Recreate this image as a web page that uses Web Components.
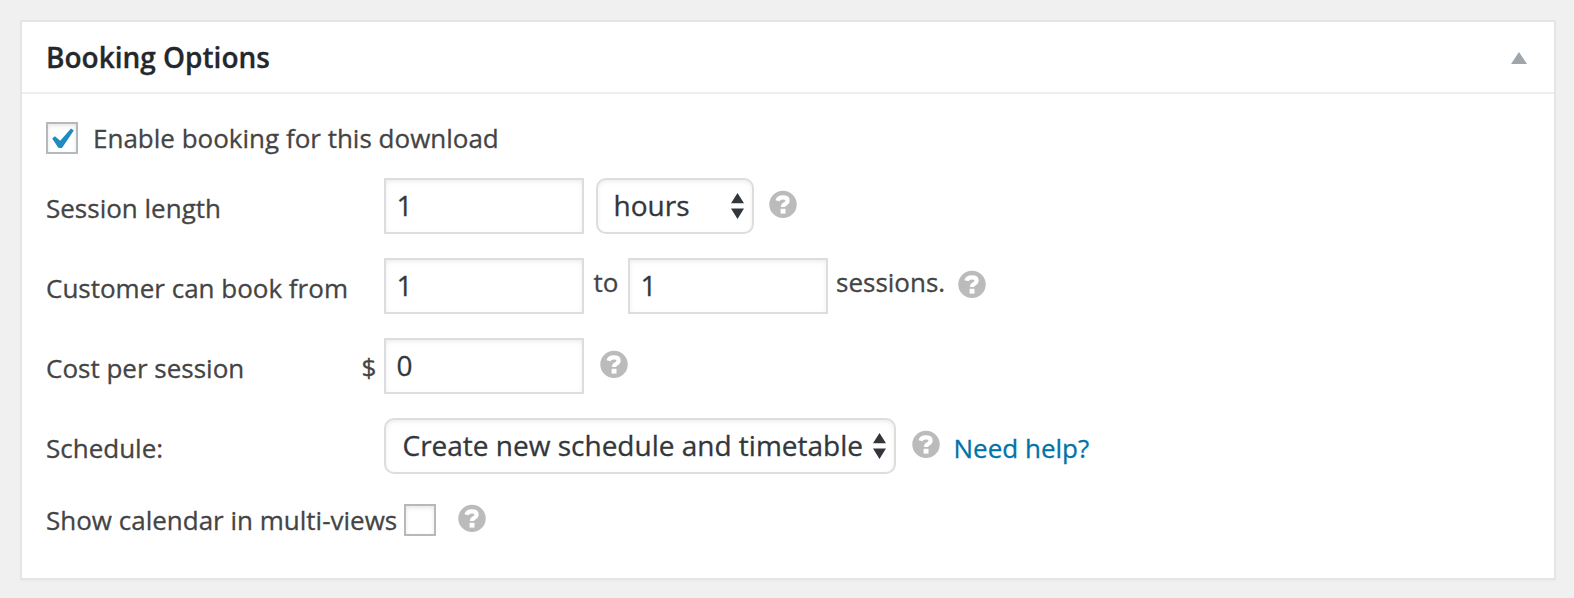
<!DOCTYPE html>
<html lang="en"><head><meta charset="utf-8"><title>Booking Options</title>
<style>
html,body{margin:0;height:100%}
body{background:#f0f0f0;font-family:"Open Sans",sans-serif;font-size:26px;line-height:36px;color:#444;-webkit-text-stroke:.3px;padding:20px 18px 18px 20px;box-sizing:border-box;overflow:hidden}
</style></head><body>
<meta-panel heading="Booking Options">
  <form-row style="--h:32px;--mb:24px"><check-box checked></check-box><text-bit style="--l:15px;--t:-2px">Enable booking for this download</text-bit></form-row>
  <form-row><text-bit style="--w:338px;--t:12px">Session length</text-bit><value-field>1</value-field><select-field style="--l:12px;--w:158px;--p:15.5px">hours</select-field><help-tip style="--l:15px;--t:12px"></help-tip></form-row>
  <form-row><text-bit style="--w:338px;--t:12px">Customer can book from</text-bit><value-field>1</value-field><text-bit style="--l:9.5px;--w:34.5px;--t:6px">to</text-bit><value-field>1</value-field><text-bit style="--l:8px;--w:122px;--t:6px">sessions.</text-bit><help-tip style="--t:12px"></help-tip></form-row>
  <form-row><text-bit style="--w:315.500px;--t:12px">Cost per session</text-bit><text-bit style="--w:22.500px;--t:11px">$</text-bit><value-field>0</value-field><help-tip style="--l:16px;--t:12px"></help-tip></form-row>
  <form-row style="--mb:30px"><text-bit style="--w:338px;--t:12px">Schedule:</text-bit><select-field style="--w:512px;--p:16.500px">Create new schedule and timetable</select-field><help-tip style="--l:16px;--t:12px"></help-tip><text-bit style="--l:13.5px;--t:12px;--c:#0073aa">Need help?</text-bit></form-row>
  <form-row style="--h:32px;--mb:0px"><text-bit style="--w:358px;--t:-2px">Show calendar in multi-views</text-bit><check-box></check-box><help-tip style="--l:22px;--t:0px"></help-tip></form-row>
</meta-panel>
<script>
const define=(name,html,init)=>customElements.define(name,class extends HTMLElement{
  constructor(){super();this.attachShadow({mode:'open'}).innerHTML=html;}
  connectedCallback(){if(init)init(this,this.shadowRoot);}
});
define('meta-panel',`<style>
:host{display:block;box-sizing:border-box;height:100%;background:#fff;border:2px solid #e5e5e5;box-shadow:0 2px 2px rgba(0,0,0,.02)}
header{display:flex;justify-content:space-between;align-items:center;height:70px;border-bottom:2px solid #eee;padding:0 27px 0 24px}
h2{margin:0;font-size:28px;line-height:40px;font-weight:600;color:#23282d}
svg{display:block;margin-top:2px}
main{padding:28px 24px 0}
</style><header><h2></h2><svg width="16" height="12" viewBox="0 0 16 12"><path fill="#a0a5aa" d="M8 0l8 12H0z"/></svg></header><main><slot></slot></main>`,
(el,root)=>{root.querySelector('h2').textContent=el.getAttribute('heading');});
define('form-row',`<style>:host{display:flex;align-items:flex-start;height:var(--h,56px);margin-bottom:var(--mb,24px)}</style><slot></slot>`);
define('text-bit',`<style>:host{display:block;flex:none;box-sizing:border-box;width:var(--w,auto);margin-left:var(--l,0);margin-top:var(--t,0);color:var(--c,inherit);-webkit-text-stroke-color:currentcolor;white-space:nowrap}</style><slot></slot>`);
define('value-field',`<style>:host{display:block;flex:none;box-sizing:border-box;width:200px;height:56px;border:2px solid #ddd;padding-left:10.500px;font-size:28px;line-height:50px;color:#32373c;box-shadow:inset 0 2px 4px rgba(0,0,0,.07)}</style><slot></slot>`);
define('select-field',`<style>:host{display:flex;flex:none;justify-content:space-between;box-sizing:border-box;width:var(--w);margin-left:var(--l,0);height:56px;border:2px solid #ddd;border-radius:10px;padding:0 8px 0 var(--p,16px);font-size:28px;line-height:50px;color:#32373c;white-space:nowrap;box-shadow:inset 0 2px 4px rgba(0,0,0,.07)}
svg{display:block;flex:none;margin-top:13px}</style><span><slot></slot></span><svg width="13" height="26" viewBox="0 0 13 26"><path fill="#32373c" d="M6.500 0L13 10.200H0zM0 15.600h13L6.500 26z"/></svg>`);
define('check-box',`<style>:host{display:block;flex:none;box-sizing:border-box;width:32px;height:32px;border:2px solid #b4b9be;background:#fff;box-shadow:inset 0 2px 4px rgba(0,0,0,.1)}
svg{display:none}:host([checked]) svg{display:block}</style><svg width="28" height="28" viewBox="0 0 28 28"><path fill="#1e8cbe" d="M4.200 14.500L6.900 12.300l5.300 4.500L23 4.400l2.800 2L14.500 23.200l-.9.700h-2.800l-1-.8z"/></svg>`);
define('help-tip',`<style>:host{display:block;flex:none;width:28px;height:28px;margin-left:var(--l,0);margin-top:var(--t,0)}svg{display:block;overflow:visible}</style>
<svg width="28" height="28" viewBox="0 0 28 28"><circle cx="14" cy="14.400" r="13.700" fill="#bbb"/><path d="M8.500 10.800C9 8.500 10.900 7.300 13.900 7.300c2.900 0 4.700 1.300 4.700 3.300 0 1.600-.9 2.500-2.300 3.200-1.700.8-2.300 1.400-2.300 3.300" fill="none" stroke="#fff" stroke-width="4.200"/><path fill="#fff" d="M11.600 18.800h4.900v4.800h-4.900z"/></svg>`);
</script></body></html>
